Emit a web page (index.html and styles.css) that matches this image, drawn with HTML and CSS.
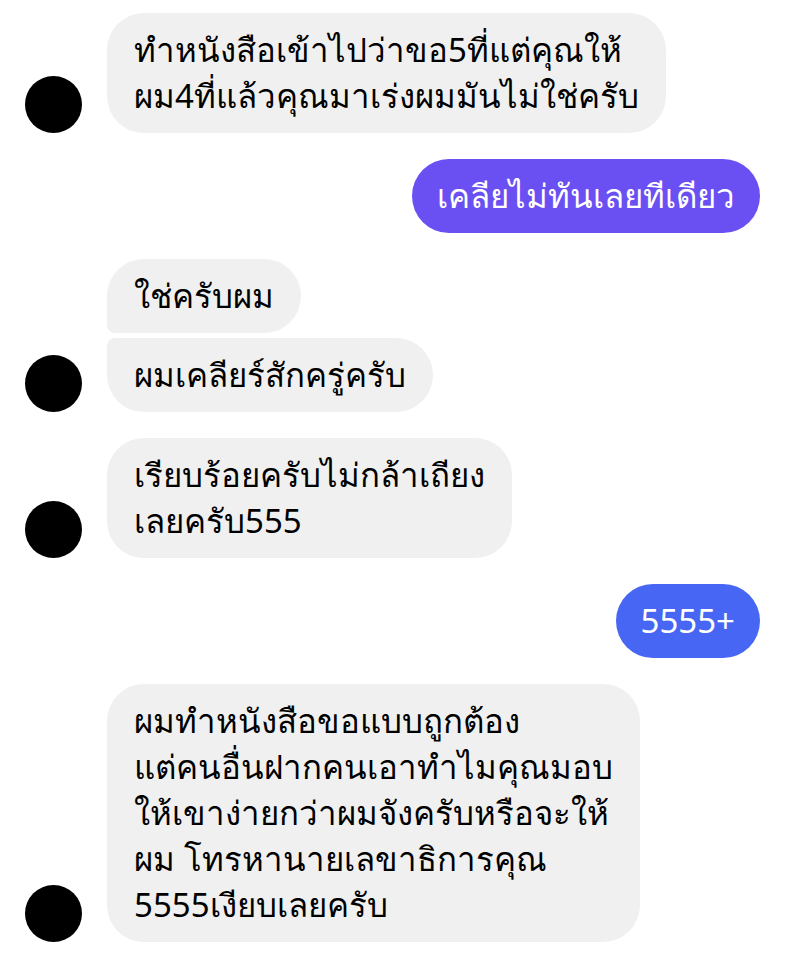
FILE: index.html
```html
<!DOCTYPE html>
<html lang="th">
<head>
    <meta charset="UTF-8">
    <meta name="viewport" content="width=device-width, initial-scale=1.0">
    <title>แชท</title>
    <link rel="stylesheet" href="styles.css">
</head>
<body>
    <div class="chat">
        <div class="row incoming">
            <div class="avatar"></div>
            <div class="group">
                <div class="bubble">ทำหนังสือเข้าไปว่าขอ5ที่แต่คุณให้<br>ผม4ที่แล้วคุณมาเร่งผมมันไม่ใช่ครับ</div>
            </div>
        </div>
        <div class="row outgoing">
            <div class="bubble purple">เคลียไม่ทันเลยทีเดียว</div>
        </div>
        <div class="row incoming">
            <div class="avatar"></div>
            <div class="group">
                <div class="bubble first">ใช่ครับผม</div>
                <div class="bubble last">ผมเคลียร์สักครู่ครับ</div>
            </div>
        </div>
        <div class="row incoming">
            <div class="avatar"></div>
            <div class="group">
                <div class="bubble">เรียบร้อยครับไม่กล้าเถียง<br>เลยครับ555</div>
            </div>
        </div>
        <div class="row outgoing">
            <div class="bubble blue">5555+</div>
        </div>
        <div class="row incoming">
            <div class="avatar"></div>
            <div class="group">
                <div class="bubble">ผมทำหนังสือขอแบบถูกต้อง<br>แต่คนอื่นฝากคนเอาทำไมคุณมอบ<br>ให้เขาง่ายกว่าผมจังครับหรือจะให้<br>ผม โทรหานายเลขาธิการคุณ<br>5555เงียบเลยครับ</div>
            </div>
        </div>
    </div>
</body>
</html>
```

FILE: styles.css
```css
body {
    margin: 0;
    background-color: #ffffff;
    font-family: "Noto Sans", sans-serif;
    color: #000000;
}

.chat {
    display: flex;
    flex-direction: column;
    gap: 26px;
    padding: 13px 50px 20px 25px;
}

.row {
    display: flex;
    align-items: flex-end;
}

.incoming {
    gap: 25px;
}

.outgoing {
    justify-content: flex-end;
}

.avatar {
    width: 57px;
    height: 57px;
    border-radius: 50%;
    background-color: #000000;
    flex-shrink: 0;
}

.group {
    display: flex;
    flex-direction: column;
    align-items: flex-start;
    gap: 5px;
}

.bubble {
    background-color: #f0f0f0;
    border-radius: 37px;
    padding: 14px 27px;
    font-size: 33px;
    line-height: 46px;
    white-space: nowrap;
}

.bubble.first {
    border-bottom-left-radius: 8px;
}

.bubble.last {
    border-top-left-radius: 8px;
}

.purple {
    background-color: #6a50f2;
    color: #ffffff;
    padding: 14px 25px;
}

.blue {
    background-color: #4666f3;
    color: #ffffff;
    padding: 14px 25px;
}
```
